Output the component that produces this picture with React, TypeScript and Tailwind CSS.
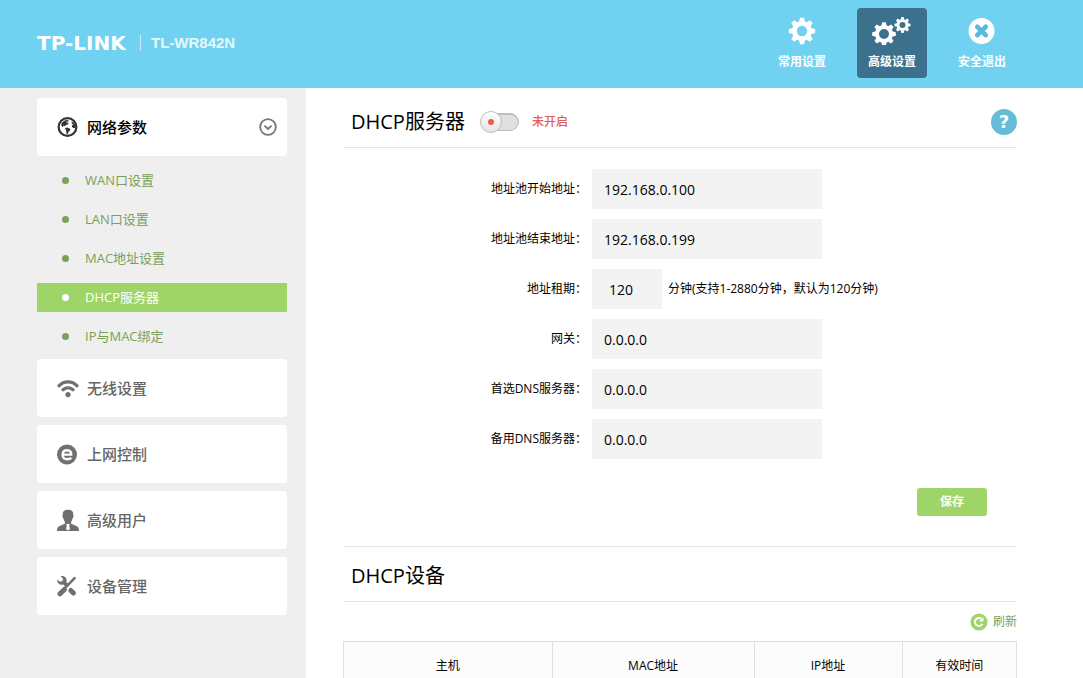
import { ReactNode, useState } from "react";

type GearProps = { cx: number; cy: number; r: number; hole: number; tooth: number };

// gear with eight teeth, drawn around its own centre
const Gear = ({ cx, cy, r, hole, tooth }: GearProps) => (
    <g transform={`translate(${cx} ${cy})`}>
        <circle r={(r * 0.76 + hole) / 2} fill="none" stroke="currentColor" strokeWidth={r * 0.76 - hole} />
        {[0, 45, 90, 135, 180, 225, 270, 315].map((angle) => (
            <path
                key={angle}
                transform={`rotate(${angle})`}
                fill="currentColor"
                d={`M${-tooth * 0.58} ${-r * 0.68}L${-tooth * 0.38} ${-r}H${tooth * 0.38}L${tooth * 0.58} ${-r * 0.68}Z`}
            />
        ))}
    </g>
);

const CommonIcon = () => (
    <svg width="28" height="28" viewBox="0 0 28 28" aria-hidden="true">
        <Gear cx={14} cy={14} r={13.2} hole={5.2} tooth={5.2} />
    </svg>
);

const AdvancedIcon = () => (
    <svg width="40" height="28" viewBox="0 0 40 28" aria-hidden="true">
        <Gear cx={12} cy={17} r={11.8} hole={5} tooth={4.6} />
        <Gear cx={30.5} cy={8} r={8} hole={3} tooth={3} />
    </svg>
);

const ExitIcon = () => (
    <svg width="28" height="28" viewBox="0 0 28 28" aria-hidden="true">
        <circle cx="13.5" cy="14" r="13" fill="currentColor" />
        <path d="M9.3 9.8L17.7 18.2M17.7 9.8L9.3 18.2" stroke="#57b9dc" strokeWidth="4.6" strokeLinecap="round" />
    </svg>
);

const GlobeIcon = () => (
    <svg width="22" height="22" viewBox="0 0 22 22" aria-hidden="true">
        <circle cx="10.5" cy="11" r="8.9" fill="none" stroke="currentColor" strokeWidth="2.2" />
        <path
            fill="currentColor"
            d="M4.2 8C5.4 5.8 7 4.6 9.4 4L12 4.6L11 5.8L9.4 5.6L9.6 6.8L11.6 6.6L11 8.4L9 9L8 10.2L6.4 9.8L6 11L4.6 10.2Z"
        />
        <path fill="currentColor" d="M8 12L10.4 11.6L13.4 13L13 14.6L11.4 16L10.6 18.4L9.4 17.4L9.2 14.8Z" />
        <path fill="currentColor" d="M14.6 5.2L17.2 7L18.4 9.8L18 12L16.2 12L14.8 10.6L15.2 9L16.6 8.6L14.8 7.4Z" />
    </svg>
);

const WifiIcon = () => (
    <svg width="22" height="22" viewBox="0 0 22 22" aria-hidden="true">
        <path
            d="M2 8.8C7 3.6 15 3.6 20 8.8M6 12.8C9 10.2 13 10.2 16 12.8"
            fill="none"
            stroke="currentColor"
            strokeWidth="3.2"
            strokeLinecap="round"
        />
        <circle cx="11" cy="17.6" r="2.6" fill="currentColor" />
    </svg>
);

const BrowserIcon = () => (
    <svg width="22" height="22" viewBox="0 0 22 22" aria-hidden="true">
        <circle cx="10" cy="11.5" r="10" fill="currentColor" />
        <path
            d="M5.6 11.6H14.2C14.4 8.8 12.8 7.2 10.2 7.2C7.4 7.2 5.6 9 5.6 11.8C5.6 14.6 7.4 16.2 10.2 16.2C12 16.2 13.2 15.8 14.4 15"
            fill="none"
            stroke="#fff"
            strokeWidth="2.4"
        />
    </svg>
);

const UserIcon = () => (
    <svg width="22" height="22" viewBox="0 0 22 22" aria-hidden="true">
        <path
            fill="currentColor"
            d="M5.8 4.8C5.8 2 8 .8 11 .8S16.2 2 16.2 4.8L16.6 7.6L15.6 9.4C15.2 11 14.8 12 14 13L14.2 14.8L20 17.2C21.4 18 22 19.4 22 22H0C0 19.4 .6 18 2 17.2L7.8 14.8L8 13C7.2 12 6.8 11 6.4 9.4L5.4 7.6Z"
        />
        <path fill="#fff" d="M9.2 15H12.8L12.2 16.8L13 20L11 21.6L9 20L9.8 16.8Z" />
    </svg>
);

const ToolsIcon = () => (
    <svg width="22" height="22" viewBox="0 0 22 22" aria-hidden="true">
        <path
            fill="currentColor"
            d="M3.6 1.2C6.6 .2 9.8 2.4 9.6 5.8L9.4 7L11.2 8.8L8.4 11.6L6.2 9.6C3 10.4 .2 8.2 .2 4.4L3 6.8L5.6 6L6 3.6Z"
        />
        <path d="M13.8 15.4L16.4 18" stroke="currentColor" strokeWidth="5" strokeLinecap="round" />
        <path d="M17.6 3.2L8.6 12.4" stroke="currentColor" strokeWidth="2.6" strokeLinecap="round" />
        <path d="M7.4 14.4L3 18.8" stroke="currentColor" strokeWidth="5" strokeLinecap="round" />
    </svg>
);

const ChevronIcon = () => (
    <svg width="18" height="18" viewBox="0 0 18 18" aria-hidden="true">
        <circle cx="9" cy="9" r="7.8" fill="none" stroke="#777" strokeWidth="1.8" />
        <path d="M5.4 7.6L9 11L12.6 7.6" fill="none" stroke="#777" strokeWidth="1.8" />
    </svg>
);

const RefreshIcon = () => (
    <svg width="18" height="18" viewBox="0 0 18 18" aria-hidden="true">
        <circle cx="9" cy="9" r="8.6" fill="#9fd568" />
        <path d="M12.4 11A4 4 0 1 1 11.4 5.8" fill="none" stroke="#fff" strokeWidth="1.9" />
        <path d="M13.4 4V8.4H9.2Z" fill="#fff" />
    </svg>
);

const topNav = [
    { label: "常用设置", icon: <CommonIcon />, active: false },
    { label: "高级设置", icon: <AdvancedIcon />, active: true },
    { label: "安全退出", icon: <ExitIcon />, active: false },
];

const subMenu = ["WAN口设置", "LAN口设置", "MAC地址设置", "DHCP服务器", "IP与MAC绑定"];

const Header = () => (
    <header className="flex h-[88px] items-center justify-between bg-[#70d1f0] pr-[66px] pb-[2px] pl-[37px] text-white">
        <div className="flex items-center">
            <span className="w-[103px] font-['DejaVu_Sans'] text-[20px] leading-5 font-bold">TP-LINK</span>
            <span className="h-4 w-px bg-[#c4ecf9]"></span>
            <span className="pl-[10px] font-['Liberation_Sans'] text-[15px] leading-5 font-bold text-[#e4f8ff]">TL-WR842N</span>
        </div>
        <nav className="flex gap-5">
            {topNav.map((item) => (
                <a
                    key={item.label}
                    href="#"
                    className={`flex h-[70px] w-[70px] flex-col items-center gap-[9px] rounded pt-[9px] text-[12px] leading-4 font-bold ${
                        item.active ? "bg-[#3c718d]" : ""
                    }`}
                >
                    {item.icon}
                    {item.label}
                </a>
            ))}
        </nav>
    </header>
);

type MenuCardProps = { label: string; icon: ReactNode; open?: boolean };

const MenuCard = ({ label, icon, open }: MenuCardProps) => (
    <button
        type="button"
        className={`flex h-[58px] w-full items-center rounded bg-white pr-[10px] pl-5 text-[15px] font-medium ${
            open ? "text-[#333]" : "text-[#707070]"
        }`}
    >
        {icon}
        <span className={`flex-1 pb-px pl-2 text-left leading-5 ${open ? "text-black" : "text-[#666]"}`}>{label}</span>
        {open && <ChevronIcon />}
    </button>
);

const Sidebar = () => (
    <aside className="w-[306px] shrink-0 bg-[#efefef] pt-[10px] pr-[19px] pb-5 pl-[37px]">
        <div className="flex flex-col gap-2">
            <MenuCard label="网络参数" icon={<GlobeIcon />} open />
            <ul className="flex flex-col gap-[10px] pt-[2px]">
                {subMenu.map((label) => {
                    const active = label === "DHCP服务器";
                    return (
                        <li key={label}>
                            <a
                                href="#"
                                className={`flex h-[29px] items-center gap-4 pl-[25px] text-[13px] ${
                                    active ? "bg-[#9fd568] text-white" : "text-[#7ba05b]"
                                }`}
                            >
                                <span className="h-[7px] w-[7px] rounded-full bg-current"></span>
                                {label}
                            </a>
                        </li>
                    );
                })}
            </ul>
            <MenuCard label="无线设置" icon={<WifiIcon />} />
            <MenuCard label="上网控制" icon={<BrowserIcon />} />
            <MenuCard label="高级用户" icon={<UserIcon />} />
            <MenuCard label="设备管理" icon={<ToolsIcon />} />
        </div>
    </aside>
);

type FieldProps = { id: string; label: string; value: string; short?: boolean; note?: string };

const Field = ({ id, label, value, short, note }: FieldProps) => (
    <div className="flex items-center">
        <label htmlFor={id} className="w-[249px] pr-[5px] text-right text-[12px] leading-5">
            {label}：
        </label>
        <input
            id={id}
            type="text"
            defaultValue={value}
            className={`h-10 bg-[#f3f3f3] text-[14px] outline-none ${short ? "w-[70px] px-[17px]" : "w-[230px] px-3"}`}
        />
        {note && <span className="pl-[6px] text-[12px] leading-5">{note}</span>}
    </div>
);

const DhcpServer = () => {
    const [enabled, setEnabled] = useState(false);
    return (
        <section>
            <div className="flex h-[60px] items-center border-b border-[#e6e6e6] pt-2 pl-2">
                <h1 className="text-[20px] leading-7">DHCP服务器</h1>
                <label className="flex items-center pl-[15px]">
                    <input
                        type="checkbox"
                        checked={enabled}
                        onChange={(e) => setEnabled(e.target.checked)}
                        className="peer sr-only"
                    />
                    <span className="flex w-[39px] items-center peer-checked:flex-row-reverse">
                        <span className="z-10 flex h-[22px] w-[22px] shrink-0 items-center justify-center rounded-full border border-[#bdbdbd] bg-linear-to-b from-white to-[#e4e4e4]">
                            <span className="h-[6px] w-[6px] rounded-full bg-[#ee5a50]"></span>
                        </span>
                        <span className="-mx-4 h-[18px] w-[33px] shrink-0 rounded-full border border-t-2 border-[#bdbdbd] bg-[#e0e0e0]"></span>
                    </span>
                    <span className="pl-[13px] text-[12px] leading-5 font-medium text-[#e0604f]">
                        {enabled ? "已开启" : "未开启"}
                    </span>
                </label>
                <button
                    type="button"
                    aria-label="帮助"
                    className="ml-auto flex h-[26px] w-[26px] items-center justify-center rounded-full bg-[#66bcd8] font-['DejaVu_Sans'] text-[18px] leading-5 font-bold text-white"
                >
                    ?
                </button>
            </div>
            <form onSubmit={(e) => e.preventDefault()}>
                <div className="flex flex-col gap-[10px] pt-[21px]">
                    <Field id="start" label="地址池开始地址" value="192.168.0.100" />
                    <Field id="end" label="地址池结束地址" value="192.168.0.199" />
                    <Field id="lease" label="地址租期" value="120" short note="分钟(支持1-2880分钟，默认为120分钟)" />
                    <Field id="gateway" label="网关" value="0.0.0.0" />
                    <Field id="dns1" label="首选DNS服务器" value="0.0.0.0" />
                    <Field id="dns2" label="备用DNS服务器" value="0.0.0.0" />
                </div>
                <div className="flex justify-end pt-[29px] pr-[30px] pb-[30px]">
                    <button type="submit" className="h-7 w-[70px] rounded-[3px] bg-[#9fd568] text-[12px] font-bold text-white">
                        保存
                    </button>
                </div>
            </form>
        </section>
    );
};

const DhcpDevices = () => (
    <section>
        <h2 className="flex h-14 items-center border-y border-[#e6e6e6] pt-1 pl-2 text-[20px] leading-7">DHCP设备</h2>
        <div className="flex h-[39px] items-center justify-end">
            <button type="button" className="flex items-center gap-[5px] text-[12px] leading-5 text-[#7ba05b]">
                <RefreshIcon />
                刷新
            </button>
        </div>
        <table className="w-full table-fixed border-collapse text-[12px]">
            <thead>
                <tr className="h-12 bg-[#fcfcfc]">
                    <th className="w-[31%] border border-[#e0e0e0] font-normal">主机</th>
                    <th className="w-[30%] border border-[#e0e0e0] font-normal">MAC地址</th>
                    <th className="w-[22%] border border-[#e0e0e0] font-normal">IP地址</th>
                    <th className="w-[17%] border border-[#e0e0e0] font-normal">有效时间</th>
                </tr>
            </thead>
        </table>
    </section>
);

const App = () => {
    return (
        <div className="flex min-h-screen flex-col bg-white font-['Open_Sans','Noto_Sans_CJK_SC',sans-serif] text-black">
            <Header />
            <div className="flex flex-1">
                <Sidebar />
                <main className="min-w-0 flex-1 pr-[66px] pl-[37px]">
                    <DhcpServer />
                    <DhcpDevices />
                </main>
            </div>
        </div>
    );
};

export default App;
